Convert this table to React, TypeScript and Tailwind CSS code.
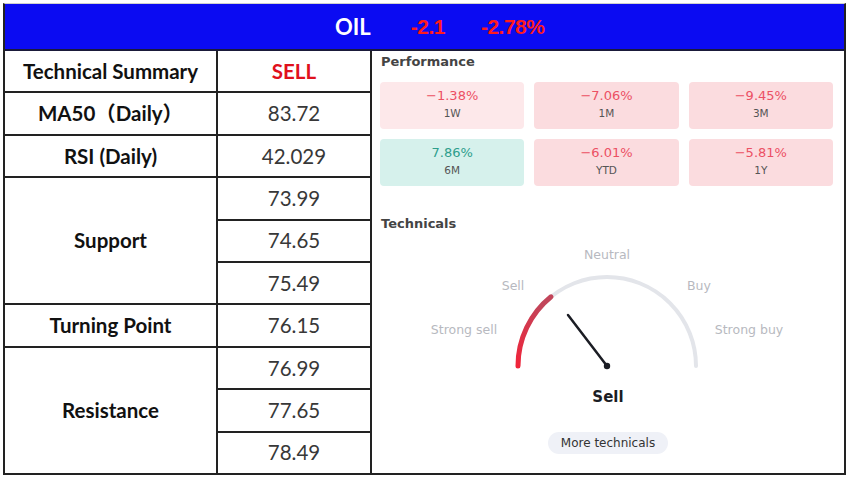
import React from 'react';

const rows = [
  { label: 'Technical Summary', values: ['SELL'], red: true },
  { label: 'MA50（Daily）', values: ['83.72'] },
  { label: 'RSI (Daily)', values: ['42.029'] },
  { label: 'Support', values: ['73.99', '74.65', '75.49'] },
  { label: 'Turning Point', values: ['76.15'] },
  { label: 'Resistance', values: ['76.99', '77.65', '78.49'] },
];

const perf = [
  { value: '−1.38%', label: '1W', tone: 'light' },
  { value: '−7.06%', label: '1M', tone: 'red' },
  { value: '−9.45%', label: '3M', tone: 'red' },
  { value: '7.86%', label: '6M', tone: 'green' },
  { value: '−6.01%', label: 'YTD', tone: 'red' },
  { value: '−5.81%', label: '1Y', tone: 'red' },
];

const toneBg: Record<string, string> = {
  light: 'bg-[#fde8ea]',
  red: 'bg-[#fbdcdf]',
  green: 'bg-[#d6f1ec]',
};

const SummaryTable = () => (
  <div className="grid grid-cols-[211px_152px] grid-rows-[repeat(10,minmax(0,1fr))] gap-[2px] bg-[#222] border-r-2 border-[#222] font-['Lato','Noto_Sans_CJK_SC',sans-serif] text-[20.5px]">
    {rows.map((row) => (
      <React.Fragment key={row.label}>
        <div
          className={`bg-white flex items-center justify-center font-bold text-[#111] ${
            row.values.length === 3 ? 'row-span-3' : ''
          }`}
        >
          {row.label}
        </div>
        {row.values.map((v) => (
          <div
            key={v}
            className={`col-start-2 bg-white flex items-center justify-center ${
              row.red ? 'text-[#e0101c] font-bold' : 'text-[#383838]'
            }`}
          >
            {v}
          </div>
        ))}
      </React.Fragment>
    ))}
  </div>
);

const Gauge = () => (
  <svg width="472" height="140" viewBox="0 0 472 140" className="block">
    <defs>
      <linearGradient id="redArc" x1="0" y1="1" x2="0.4" y2="0">
        <stop offset="0" stopColor="#f0243a" />
        <stop offset="1" stopColor="#c2455a" />
      </linearGradient>
    </defs>
    <g fontFamily="'DejaVu Sans', sans-serif" fontSize="12.5" fill="#b7b9c0" textAnchor="middle">
      <text x="235" y="24">Neutral</text>
      <text x="141" y="55">Sell</text>
      <text x="327" y="55">Buy</text>
      <text x="92" y="99">Strong sell</text>
      <text x="377" y="99">Strong buy</text>
    </g>
    <path d="M146 131 A89 89 0 0 1 324 131" fill="none" stroke="#e3e5ea" strokeWidth="4" strokeLinecap="round" />
    <path d="M146 131 A89 89 0 0 1 179 61.8" fill="none" stroke="url(#redArc)" strokeWidth="5" strokeLinecap="round" />
    <line x1="196" y1="80" x2="235" y2="131" stroke="#1b1d24" strokeWidth="2.5" strokeLinecap="round" />
    <circle cx="235" cy="131" r="3.2" fill="#1b1d24" />
  </svg>
);

const RightPanel = () => (
  <div className="flex-1 flex flex-col pt-[3px] font-['DejaVu_Sans',sans-serif]">
    <div className="pl-[9px] text-[13px] leading-4 font-semibold text-[#444]">Performance</div>
    <div className="mt-[12px] ml-[8px] w-[453px] grid grid-cols-3 gap-x-[10px] gap-y-[10px]">
      {perf.map((p) => (
        <div key={p.label} className={`h-[47px] rounded-[4px] pt-[6px] flex flex-col items-center ${toneBg[p.tone]}`}>
          <div className={`text-[13px] leading-4 ${p.tone === 'green' ? 'text-[#2e9e8c]' : 'text-[#ec5064]'}`}>{p.value}</div>
          <div className="mt-[3px] text-[10.5px] leading-[13px] text-[#555]">{p.label}</div>
        </div>
      ))}
    </div>
    <div className="mt-[30px] pl-[9px] text-[13px] leading-4 font-semibold text-[#444]">Technicals</div>
    <div className="mt-[3px]">
      <Gauge />
    </div>
    <div className="mt-[12px] text-center text-[15px] leading-5 font-bold text-[#1b1d24]">Sell</div>
    <div className="mt-[25px] flex justify-center">
      <div className="h-[22px] px-[13px] rounded-full bg-[#eff1f7] text-[12px] leading-[22px] text-[#333]">More technicals</div>
    </div>
  </div>
);

export default function App() {
  return (
    <div className="w-[850px] h-[478px] bg-white overflow-hidden">
      <div className="ml-[3px] mt-[3px] w-[843px] h-[472px] flex flex-col border-t border-[#cfcfcf] border-x-2 border-b-2 border-x-[#222] border-b-[#222]">
        <div className="h-[47px] shrink-0 bg-[#0b0bf2] border-b-2 border-[#1a1a3a] flex items-center pl-[330px] text-[21px]">
          <span className="font-['Lato',sans-serif] font-bold text-white text-[22px]">OIL</span>
          <span className="ml-[40px] font-['Liberation_Sans',sans-serif] font-bold text-[#ff1b1b] tracking-[-0.5px]">-2.1</span>
          <span className="ml-[36px] font-['Liberation_Sans',sans-serif] font-bold text-[#ff1b1b] tracking-[-0.5px]">-2.78%</span>
        </div>
        <div className="flex-1 flex min-h-0">
          <SummaryTable />
          <RightPanel />
        </div>
      </div>
    </div>
  );
}
